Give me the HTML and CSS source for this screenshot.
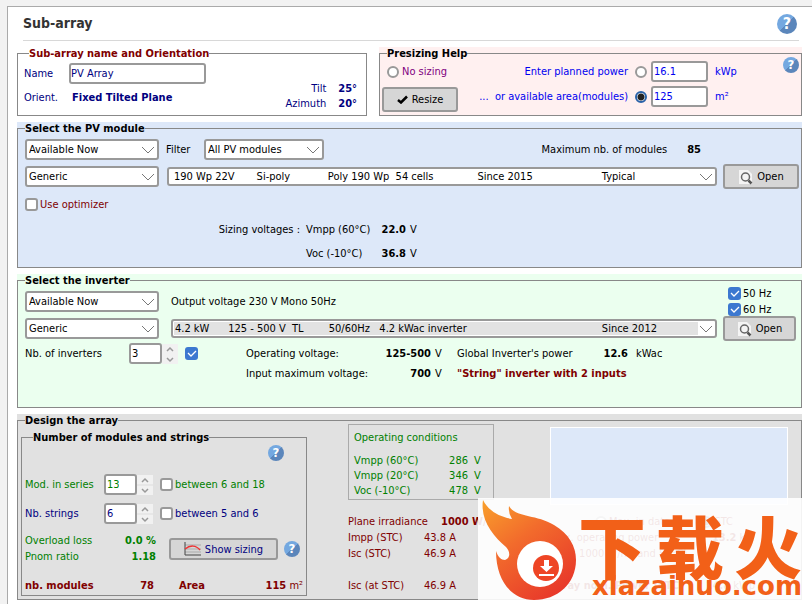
FILE: index.html
```
<!DOCTYPE html>
<html lang="en">
<head>
  <meta charset="UTF-8" />
  <meta name="viewport" content="width=device-width, initial-scale=1.0"/>
  <title>Sub-array</title>
  <link rel="stylesheet" href="styles.css">
</head>
<body>

<main class="window">
  <header class="title-bar">
    <h1>Sub-array</h1>
    <button class="help large" aria-label="Help">?</button>
  </header>

  <div class="top-row">
    <!-- Name and orientation -->
    <div class="panel">
      <fieldset>
        <legend class="maroon inset">Sub-array name and Orientation</legend>
        <div class="identity navy">
          <div class="identity-main">
            <label for="name">Name</label>
            <input type="text" id="name" class="name-input" value="PV Array">
            <span>Orient.</span>
            <b class="plane">Fixed Tilted Plane</b>
          </div>
          <div class="angles">
            <span>Tilt</span><b>25°</b>
            <span>Azimuth</span><b>20°</b>
          </div>
        </div>
      </fieldset>
    </div>

    <!-- Presizing -->
    <div class="panel pink">
      <fieldset>
        <legend>Presizing Help</legend>
        <div class="presizing">
          <div class="presizing-left">
            <label class="check purple"><input type="radio" name="sizing">No sizing</label>
            <button class="btn resize">
              <svg width="11" height="9" viewBox="0 0 11 9"><path d="M1 5l3 2.500L10 1.500" fill="none" stroke="#000" stroke-width="2.500"/></svg>
              Resize
            </button>
          </div>
          <div class="presizing-grid blue">
            <label for="byPower">Enter planned power</label>
            <input type="radio" name="sizing" id="byPower">
            <input type="text" value="16.1" aria-label="Planned power">
            <span>kWp</span>
            <label for="byArea">... &nbsp;or available area(modules)</label>
            <input type="radio" name="sizing" id="byArea" checked>
            <input type="text" value="125" aria-label="Available area">
            <span>m²</span>
          </div>
          <button class="help raised" aria-label="Presizing help">?</button>
        </div>
      </fieldset>
    </div>
  </div>

  <!-- PV module -->
  <div class="panel module">
    <fieldset>
      <legend>Select the PV module</legend>
      <div class="rows">
        <div class="row">
          <select class="short" aria-label="Module availability"><option>Available Now</option></select>
          <label for="filter" class="filter-label">Filter</label>
          <select id="filter" class="filter"><option>All PV modules</option></select>
          <div class="max-modules"><span>Maximum nb. of modules</span><b>85</b></div>
        </div>
        <div class="row">
          <select class="short" aria-label="Module manufacturer"><option>Generic</option></select>
          <select class="long" aria-label="Module model"><option>190 Wp 22V&nbsp;&nbsp;&nbsp;&nbsp;&nbsp;&nbsp;&nbsp;Si-poly&nbsp;&nbsp;&nbsp;&nbsp;&nbsp;&nbsp;&nbsp;&nbsp;&nbsp;&nbsp;&nbsp;&nbsp;Poly 190 Wp&nbsp; 54 cells&nbsp;&nbsp;&nbsp;&nbsp;&nbsp;&nbsp;&nbsp;&nbsp;&nbsp;&nbsp;&nbsp;&nbsp;&nbsp;&nbsp;Since 2015&nbsp;&nbsp;&nbsp;&nbsp;&nbsp;&nbsp;&nbsp;&nbsp;&nbsp;&nbsp;&nbsp;&nbsp;&nbsp;&nbsp;&nbsp;&nbsp;&nbsp;&nbsp;&nbsp;&nbsp;&nbsp;&nbsp;Typical</option></select>
          <button class="btn open">
            <svg width="15" height="16" viewBox="0 0 15 16"><path d="M1 1h9l4 4v10H1z" fill="#f4f4f4"/><circle cx="7.500" cy="8" r="4" fill="none" stroke="#666" stroke-width="1.500"/><path d="M10.500 11.500l3 3" stroke="#555" stroke-width="2.500"/></svg>
            Open
          </button>
        </div>
        <label class="check maroon optimizer"><input type="checkbox">Use optimizer</label>
        <div class="voltages">
          <span class="voltages-title">Sizing voltages :</span><span>Vmpp (60°C)</span><b>22.0</b><span>V</span>
          <span></span><span>Voc (-10°C)</span><b>36.8</b><span>V</span>
        </div>
      </div>
    </fieldset>
  </div>

  <!-- Inverter -->
  <div class="panel inverter">
    <fieldset>
      <legend>Select the inverter</legend>
      <div class="rows">
        <div class="row">
          <select class="short" aria-label="Inverter availability"><option>Available Now</option></select>
          <span class="output">Output voltage 230 V Mono 50Hz</span>
          <div class="frequencies">
            <label class="check"><input type="checkbox" checked>50 Hz</label>
            <label class="check"><input type="checkbox" checked>60 Hz</label>
          </div>
        </div>
        <div class="row">
          <select class="short" aria-label="Inverter manufacturer"><option>Generic</option></select>
          <select class="long shaded" aria-label="Inverter model"><option>4.2 kW&nbsp;&nbsp;&nbsp;&nbsp;&nbsp;&nbsp;125 - 500 V&nbsp;&nbsp;TL&nbsp;&nbsp;&nbsp;&nbsp;&nbsp;&nbsp;&nbsp;&nbsp;50/60Hz&nbsp;&nbsp;&nbsp;4.2 kWac inverter&nbsp;&nbsp;&nbsp;&nbsp;&nbsp;&nbsp;&nbsp;&nbsp;&nbsp;&nbsp;&nbsp;&nbsp;&nbsp;&nbsp;&nbsp;&nbsp;&nbsp;&nbsp;&nbsp;&nbsp;&nbsp;&nbsp;&nbsp;&nbsp;&nbsp;&nbsp;&nbsp;&nbsp;&nbsp;&nbsp;&nbsp;&nbsp;&nbsp;&nbsp;&nbsp;&nbsp;&nbsp;&nbsp;&nbsp;&nbsp;&nbsp;&nbsp;&nbsp;Since 2012</option></select>
          <button class="btn open">
            <svg width="15" height="16" viewBox="0 0 15 16"><path d="M1 1h9l4 4v10H1z" fill="#f4f4f4"/><circle cx="7.500" cy="8" r="4" fill="none" stroke="#666" stroke-width="1.500"/><path d="M10.500 11.500l3 3" stroke="#555" stroke-width="2.500"/></svg>
            Open
          </button>
        </div>
        <div class="inverter-data">
          <div class="count">
            <label for="inverters">Nb. of inverters</label>
            <span class="spinner">
              <input type="number" id="inverters" value="3">
              <svg width="16" height="20" viewBox="0 0 16 20"><path d="M0 0h16v20H0z" fill="#f1f1f1"/><path d="M5 7l3-3 3 3M5 14l3 3 3-3" fill="none" stroke="#999" stroke-width="1.500"/></svg>
            </span>
            <input type="checkbox" aria-label="Lock number of inverters" checked>
          </div>
          <div class="specs">
            <span>Operating voltage:</span><b>125-500</b><span>V</span><span>Global Inverter's power</span><b>12.6</b><span class="unit">kWac</span>
            <span>Input maximum voltage:</span><b>700</b><span>V</span><strong class="maroon">"String" inverter with 2 inputs</strong>
          </div>
        </div>
      </div>
    </fieldset>
  </div>

  <!-- Array design -->
  <div class="panel design">
    <fieldset>
      <legend>Design the array</legend>
      <div class="design-cols">
        <fieldset class="strings">
          <legend class="inset">Number of modules and strings</legend>
          <div class="strings-help"><button class="help" aria-label="Strings help">?</button></div>
          <div class="string-row green">
            <label for="series">Mod. in series</label>
            <span class="spinner">
              <input type="number" id="series" value="13">
              <svg width="16" height="20" viewBox="0 0 16 20"><path d="M0 0h16v20H0z" fill="#f1f1f1"/><path d="M0 10h16" stroke="#ddd"/><path d="M5 7l3-3 3 3M5 14l3 3 3-3" fill="none" stroke="#999" stroke-width="1.500"/></svg>
            </span>
            <label class="check"><input type="checkbox">between 6 and 18</label>
          </div>
          <div class="string-row navy">
            <label for="strings">Nb. strings</label>
            <span class="spinner">
              <input type="number" id="strings" value="6">
              <svg width="16" height="20" viewBox="0 0 16 20"><path d="M0 0h16v20H0z" fill="#f1f1f1"/><path d="M0 10h16" stroke="#ddd"/><path d="M5 7l3-3 3 3M5 14l3 3 3-3" fill="none" stroke="#999" stroke-width="1.500"/></svg>
            </span>
            <label class="check"><input type="checkbox">between 5 and 6</label>
          </div>
          <div class="ratio-row">
            <div class="ratios green">
              <span>Overload loss</span><b>0.0 %</b>
              <span>Pnom ratio</span><b>1.18</b>
            </div>
            <button class="btn sizing navy">
              <svg width="17" height="14" viewBox="0 0 17 14"><path d="M1 3h16M1 7h16M1 10h16" stroke="#aaa"/><path d="M1 0v13h16" fill="none" stroke="#444"/><path d="M1 7c5-4 11-4 15 1" fill="none" stroke="#e33" stroke-width="1.500"/></svg>
              Show sizing
            </button>
            <button class="help" aria-label="Sizing help">?</button>
          </div>
          <div class="totals maroon">
            <b>nb. modules</b><b class="num">78</b><b class="area">Area</b><span class="num"><b>115</b> m²</span>
          </div>
        </fieldset>

        <div class="conditions">
          <section class="operating green">
            <h2>Operating conditions</h2>
            <div class="operating-grid">
              <span>Vmpp (60°C)</span><span>286</span><span>V</span>
              <span>Vmpp (20°C)</span><span>346</span><span>V</span>
              <span>Voc (-10°C)</span><span>478</span><span>V</span>
            </div>
          </section>
          <div class="currents maroon">
            <p class="irradiance"><span>Plane irradiance</span><b>1000 W/m²</b></p>
            <p><span>Impp (STC)</span><span>43.8 A</span></p>
            <p><span>Isc (STC)</span><span>46.9 A</span></p>
            <p class="last"><span>Isc (at STC)</span><span>46.9 A</span></p>
          </div>
        </div>

        <div class="power maroon">
          <div class="plot"></div>
          <div class="power-modes">
            <label class="check"><input type="radio" name="mode">Max. in data</label>
            <label class="check"><input type="radio" name="mode" checked>STC</label>
          </div>
          <p><span>Max. operating power</span><span><b>13.2</b> kW</span></p>
          <p class="indent">at 1000 W/m² and 50°C)</p>
          <p class="last"><b>Array nom. Power (STC)</b><span><b>14.8</b> kWp</span></p>
        </div>
      </div>
    </fieldset>

    <div class="watermark">
      <svg class="flame" width="100" height="102" viewBox="0 0 100 102">
        <defs>
          <linearGradient id="fire" x1="0" y1="0" x2="0.700" y2="1">
            <stop offset="0" stop-color="#f9a02c"/>
            <stop offset="0.450" stop-color="#f26b2c"/>
            <stop offset="1" stop-color="#e8392a"/>
          </linearGradient>
        </defs>
        <path fill="url(#fire)" d="M5 2C11 14 23 19 34 21Q30 15 31 8C38 20 58 16 76 27C91 36 98 48 98 62C98 86 79 102 56 102C34 102 18 83 18 53C20 59 23 62 27 62C33 60 32 53 28 49C15 38 2 22 5 2Z"/>
        <circle cx="62" cy="66" r="23" fill="#fff"/>
        <circle cx="68" cy="70" r="13" fill="#ee4525"/>
        <path fill="#fff" d="M66 62h5v6h4l-6.500 6L62 68h4zM61 76h15v2H61z"/>
      </svg>
      <div class="brand">
        <div class="brand-name" lang="zh-CN"><span>下</span><span>载</span><span>火</span></div>
        <span class="brand-url">xiazaihuo.com</span>
      </div>
    </div>
  </div>
</main>

</body>
</html>
```
FILE: styles.css
```
* {
  box-sizing: border-box;
}

body {
  margin: 0;
  padding: 6px 0 0 7px;
  background: #f2f2f2;
  color: #000;
  font-family: 'DejaVu Sans Condensed', 'DejaVu Sans', sans-serif;
  font-size: 11px;
  line-height: 15px;
}

input, select, button {
  font: inherit;
  color: inherit;
  margin: 0;
}

p, h1, h2 {
  margin: 0;
}

.maroon { color: #800000; }
.navy { color: #000080; }
.blue { color: #0000f0; }
.green { color: #008000; }
.purple { color: #800080; }

.window {
  min-height: calc(100vh - 6px);
  padding: 0 10px 4px 9px;
  background: #fff;
  border-top: 1px solid #aaa;
  border-left: 1px solid #aaa;
}

.title-bar {
  display: flex;
  justify-content: space-between;
  align-items: center;
  height: 34px;
  margin: 0 3px 6px 6px;
  padding-right: 2px;
  border-bottom: 1px solid #d8d8d8;
}

h1 {
  font-size: 14px;
  color: #333;
}

.help {
  flex: none;
  width: 16px;
  height: 16px;
  padding: 0;
  border: none;
  border-radius: 50%;
  background: linear-gradient(135deg, #74a8e0 50%, #5b86bb 50%);
  color: #fff;
  font-weight: bold;
  font-size: 13px;
  line-height: 16px;
}

.help.large {
  width: 20px;
  height: 20px;
  font-size: 16px;
  line-height: 20px;
}

/* Panels */
.panel {
  position: relative;
  margin-bottom: 6px;
}

fieldset {
  min-width: 0;
  height: 100%;
  margin: 0;
  padding: 0;
  border: 1px solid #888;
}

legend {
  margin-left: 7px;
  padding: 0;
  font-size: 11px;
  font-weight: bold;
  line-height: 13px;
}

legend.inset {
  margin-left: 11px;
}

.pink { background: #fff0f0; }
.module { background: #dde8f9; }
.inverter { background: #ebffef; }
.design { background: #e1e1e1; margin-bottom: 0; }

.top-row {
  display: grid;
  grid-template-columns: 350fr 423fr;
  gap: 12px;
}

/* Controls */
input[type="text"], input[type="number"] {
  width: 57px;
  height: 21px;
  padding: 0 1px;
  border: 2px solid #999;
  border-radius: 3px;
  background: #fff;
}

input[type="number"] {
  width: 33px;
  appearance: textfield;
}

input[type="radio"] {
  appearance: none;
  width: 12px;
  height: 12px;
  border: 2px solid #999;
  border-radius: 50%;
  background: #fff;
}

input[type="radio"]:checked {
  border-color: #2a62a8;
  background: radial-gradient(circle, #222 0 3px, #fff 4px);
}

input[type="checkbox"] {
  appearance: none;
  width: 13px;
  height: 13px;
  border: 2px solid #999;
  border-radius: 3px;
  background: #fff;
}

input[type="checkbox"]:checked {
  border: none;
  background: #3c78d0 url("data:image/svg+xml,%3Csvg xmlns='http://www.w3.org/2000/svg' viewBox='0 0 13 13'%3E%3Cpath d='M3 6l3 3 5-5' fill='none' stroke='white' stroke-width='1.300'/%3E%3C/svg%3E");
}

.check {
  display: flex;
  align-items: center;
  gap: 2px;
  white-space: nowrap;
}

select {
  appearance: none;
  height: 21px;
  padding: 0 18px 0 2px;
  border: 2px solid #999;
  border-radius: 3px;
  background: #fff url("data:image/svg+xml,%3Csvg xmlns='http://www.w3.org/2000/svg' width='14' height='8'%3E%3Cpath d='M1 1l6 6 6-6' fill='none' stroke='%23777'/%3E%3C/svg%3E") no-repeat right 2px center;
}

.btn {
  display: flex;
  flex: none;
  align-items: center;
  justify-content: center;
  gap: 4px;
  height: 25px;
  padding: 0;
  border: 2px solid #999;
  border-radius: 3px;
  background: #d6d6d6;
}

.spinner {
  display: flex;
  align-items: center;
}

/* Name and orientation */
.identity {
  display: flex;
  justify-content: space-between;
  padding: 3px 9px 4px 6px;
}

.identity-main {
  display: grid;
  grid-template-columns: 45px auto;
  grid-template-rows: 21px 27px;
  align-items: center;
}

.identity-main .name-input {
  width: 137px;
  padding: 0;
}

.plane {
  padding-left: 3px;
}

.angles {
  display: grid;
  grid-template-columns: auto auto;
  column-gap: 12px;
  align-self: end;
  text-align: right;
}

/* Presizing */
.presizing {
  display: flex;
  align-items: flex-start;
  padding: 1px 2px 3px 2px;
}

.presizing-left {
  display: flex;
  flex-direction: column;
  justify-content: space-between;
  height: 51px;
}

.presizing-left .check {
  padding: 3px 0 0 5px;
  gap: 3px;
}

.resize {
  width: 76px;
}

.presizing-grid {
  display: grid;
  flex: 1;
  grid-template-columns: 1fr 12px 57px 79px;
  grid-template-rows: 21px 21px;
  gap: 4px 0;
  align-items: center;
  text-align: right;
}

.presizing-grid > input[type="text"] {
  margin-left: 4px;
}

.presizing-grid > label {
  padding-right: 7px;
}

.presizing-grid > span {
  padding-left: 11px;
  text-align: left;
}

.presizing .raised {
  margin-top: -4px;
}

/* PV module and inverter */
.rows {
  padding: 4px 2px 2px 7px;
}

.row {
  display: flex;
  align-items: center;
  height: 21px;
  margin-bottom: 6px;
}

.short {
  flex: none;
  width: 134px;
}

.filter-label {
  width: 45px;
  padding-left: 7px;
}

.filter {
  width: 120px;
}

.max-modules {
  display: flex;
  gap: 20px;
  margin-left: auto;
  padding-right: 98px;
}

.long {
  flex: 1;
  min-width: 0;
  height: 19px;
  margin: 0 6px 0 8px;
  padding-left: 5px;
}

.long.shaded {
  margin-left: 12px;
  padding-left: 2px;
  background-color: #e2e2e2;
  background-image: url("data:image/svg+xml,%3Csvg xmlns='http://www.w3.org/2000/svg' width='14' height='8'%3E%3Cpath d='M1 1l6 6 6-6' fill='none' stroke='%23777'/%3E%3C/svg%3E"), linear-gradient(#fff, #fff);
  background-position: right 2px center, right;
  background-size: auto, 17px 100%;
  box-shadow: inset 0 0 0 1px #fff;
}

.open {
  width: 76px;
}

.inverter .open {
  width: 73px;
  margin-right: 3px;
}

.optimizer {
  height: 23px;
}

.voltages {
  display: grid;
  grid-template-columns: 277px 64px 32px auto;
  grid-auto-rows: 24px;
  align-items: center;
  column-gap: 4px;
  padding-top: 1px;
  white-space: nowrap;
}

.voltages-title {
  padding-right: 2px;
  text-align: right;
}

.voltages b {
  text-align: right;
}

.output {
  padding-left: 12px;
}

.frequencies {
  width: 71px;
  margin-left: auto;
  line-height: 16px;
}

.inverter-data {
  display: flex;
  align-items: center;
  margin: -2px 0 22px;
}

.count {
  display: grid;
  align-self: flex-start;
  grid-template-columns: 104px 49px 19px;
  align-items: center;
  width: 221px;
}

.count > input {
  margin-left: 7px;
}

.specs {
  display: grid;
  grid-template-columns: 131px 50px 18px 136px 31px 40px;
  grid-auto-rows: 20px;
  align-items: center;
  column-gap: 4px;
  white-space: nowrap;
}

.specs b {
  text-align: right;
}

.specs strong {
  grid-column: span 3;
}

.specs .unit {
  padding-left: 4px;
}

/* Array design */
.design-cols {
  display: flex;
  padding: 0 13px 3px 3px;
}

.strings {
  width: 286px;
  height: auto;
  margin-top: 4px;
}

.strings-help {
  display: flex;
  justify-content: flex-end;
  padding: 1px 22px 13px 0;
}

.string-row {
  display: grid;
  grid-template-columns: 79px 56px auto;
  align-items: center;
  height: 21px;
  margin-bottom: 8px;
  padding-left: 3px;
}

.ratio-row {
  display: flex;
  align-items: center;
  gap: 6px;
  padding: 1px 0 0 3px;
}

.ratios {
  display: grid;
  grid-template-columns: 79px 52px;
  grid-auto-rows: 16px;
  margin-right: 7px;
}

.ratios b, .num {
  text-align: right;
}

.sizing {
  width: 109px;
  height: 22px;
}

.totals {
  display: grid;
  grid-template-columns: 79px 50px 1fr 1fr;
  padding: 13px 3px 2px;
}

.area {
  padding-left: 25px;
}

.conditions {
  width: 146px;
  margin-left: 41px;
  white-space: nowrap;
}

.operating {
  height: 76px;
  margin-top: -3px;
  padding: 5px;
  border: 1px solid #aaa;
}

.operating h2 {
  margin-bottom: 8px;
  font-size: 11px;
  font-weight: normal;
}

.operating-grid {
  display: grid;
  grid-template-columns: 84px 24px auto;
  column-gap: 6px;
}

.operating-grid span:nth-child(3n + 2) {
  text-align: right;
}

.currents {
  padding-top: 14px;
  line-height: 16px;
}

.currents p {
  display: grid;
  grid-template-columns: 76px auto;
}

.currents .irradiance {
  grid-template-columns: 93px auto;
}

.last {
  padding-top: 16px;
}

.power {
  flex: 1;
  margin-left: 56px;
  line-height: 16px;
  white-space: nowrap;
}

.plot {
  height: 78px;
  margin-bottom: 9px;
  border: 1px solid #fff;
  background: #dde8f9;
}

.power-modes {
  display: flex;
  justify-content: space-between;
  padding: 0 55px 0 45px;
}

.power p {
  display: flex;
  justify-content: space-between;
  padding-right: 33px;
}

.power .indent {
  padding-left: 16px;
}

/* Logo laid over the lower right corner */
.watermark {
  position: absolute;
  right: 0;
  bottom: 0;
  display: flex;
  width: 324px;
  height: 102px;
  background: rgba(255, 255, 255, 0.900);
  color: #f26018;
}

.flame {
  flex: none;
}

.brand {
  display: flex;
  flex: 1;
  flex-direction: column;
  padding-top: 15px;
}

.brand-name {
  display: flex;
  justify-content: space-between;
  font-family: 'Noto Sans CJK SC', sans-serif;
  font-size: 68px;
  font-weight: 900;
  line-height: 64px;
}

.brand-url {
  font-family: 'DejaVu Sans', sans-serif;
  font-size: 26px;
  font-weight: bold;
  line-height: 18px;
  text-align: right;
}
```
